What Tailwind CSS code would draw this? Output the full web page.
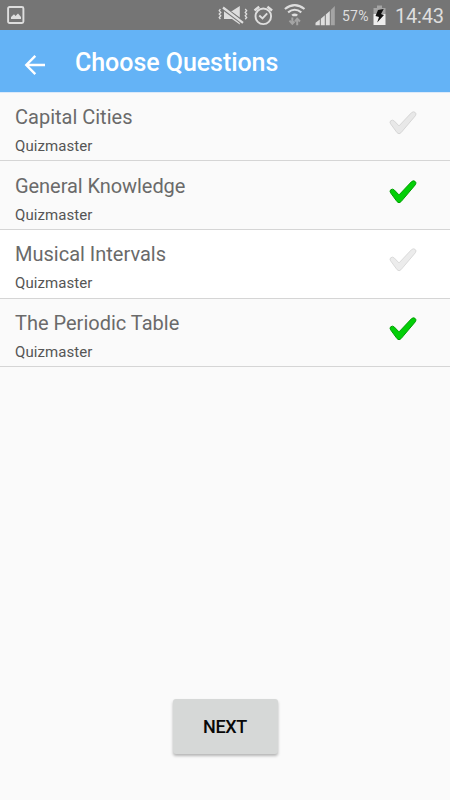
<!DOCTYPE html>
<html lang="en">
<head>
<meta charset="utf-8">
<title>Choose Questions</title>
<script src="https://cdn.jsdelivr.net/npm/@tailwindcss/browser@4"></script>
</head>
<body class="bg-[#fafafa] font-['Roboto',sans-serif]">
<svg class="absolute h-0 w-0">
  <defs>
    <path id="tick" d="M1.6 12.8Q.3 11 1.8 9.7Q3.6 8.4 5.4 10.1L10 14.9L22.6 1.6Q24.3 .2 26 1.3Q27.8 2.7 26.4 4.7L12.1 21.6Q10 24 8 21.6Z"/>
  </defs>
</svg>
<div class="flex h-[800px] w-[450px] flex-col overflow-hidden">
  <div class="flex h-[30px] shrink-0 items-center bg-[#757575] text-[#dedede]">
    <svg class="ml-[7px] h-[18px] w-[18px] shrink-0" viewBox="0 0 18 18"><rect x="1.1" y="1" width="15.3" height="16" rx="1.5" fill="none" stroke="#dedede" stroke-width="1.9"/><path d="M4 13V11L7 8.2L8.5 10L11 7.5L14 11V13Z" fill="#dedede"/></svg>
    <svg class="ml-[193px] h-[30px] w-[30px] shrink-0" viewBox="0 0 30 30" fill="none" stroke="#dedede"><path d="M2.4 9L1.2 10.7L2.8 12.4L1.2 14.1L2.8 15.8L1.2 17.5L2.4 19.2M27.2 9L28.7 10.7L27.2 12.4L28.7 14.1L27.2 15.8L28.7 17.5L27.2 19.2" stroke-width="1.3"/><path d="M6 11H14L21.8 6V24.5L14 19H6Z" fill="#dedede" stroke="none"/><path d="M4.5 7.5L25.5 23" stroke="#757575" stroke-width="4.4"/><path d="M5 7.5L25 22.8" stroke-width="2.3"/></svg>
    <svg class="ml-[5px] h-[30px] w-[20px] shrink-0" viewBox="0 0 20 30" fill="none" stroke="#dedede"><circle cx="10.3" cy="16.3" r="7.8" stroke-width="1.9"/><path d="M6.3 15.5L9.5 18.5L14.2 13.3" stroke-width="1.9"/><path d="M1.5 10.5L6.2 6.8M14.4 6.8L19.1 10.5" stroke-width="2.4"/></svg>
    <svg class="ml-[11px] h-[30px] w-[22px] shrink-0" viewBox="0 0 22 30" fill="none" stroke="#dedede" stroke-width="2.1"><path d="M.9 9Q10.7 1.2 20.5 9M4.1 12.3Q10.7 7.2 17.3 12.3"/><path d="M7.4 14.8Q10.7 12.2 14 14.8L12.6 16.3H8.8Z" fill="#dedede" stroke="none"/><path d="M8.3 17.5V24M5.5 20.7L8.3 23.8L10.5 21.5M13.2 25.3V18.5M11 21.3L13.2 18.8L16 21.5" stroke="#a4a4a4" stroke-width="2"/></svg>
    <svg class="ml-[9px] h-[30px] w-[22px] shrink-0" viewBox="0 0 22 30"><path d="M.5 25.3V22.8L4.8 19.6V25.3ZM5.8 25.3V18.7L9.8 15.3V25.3ZM10.8 25.3V14.5L14.8 11V25.3Z" fill="#dedede"/><path d="M15.8 25.3V10L19.8 6V25.3Z" fill="#a4a4a4"/></svg>
    <span class="ml-[5px] w-[28px] whitespace-nowrap pt-[2px] text-[14px] leading-none tracking-[0.2px]">57%</span>
    <svg class="ml-[3px] h-[30px] w-[14px] shrink-0" viewBox="0 0 14 30"><path d="M4 5.5H9V8H12.5V14H.5V8H4Z" fill="#a4a4a4"/><path d="M.5 14H12.5V25H.5Z" fill="#eee"/><path d="M5 10L10.7 9L8 14L11 15L4.2 22.5L6 17L2.5 16Z" fill="#111"/></svg>
    <span class="ml-[8px] whitespace-nowrap pt-[2px] text-[20px] leading-none tracking-[-0.2px]">14:43</span>
  </div>
  <header class="flex h-[63px] shrink-0 items-start border-b border-[#dceafa] bg-[#64b3f6] text-white">
    <svg class="ml-[24px] mt-[24px] h-[22px] w-[22px] shrink-0" viewBox="0 0 22 22" fill="none" stroke="#fff" stroke-width="2.4"><path d="M21 11H3M11.3 1.8L2.3 11L11.3 20.2"/></svg>
    <h1 class="ml-[29px] mt-[18px] whitespace-nowrap text-[25px] leading-[30px] font-medium tracking-[-0.05px]">Choose Questions</h1>
  </header>
  <ul class="shrink-0 text-[#6a6a6a]">
    <li class="flex h-[68px] justify-between border-b border-[#d5d5d5] pl-[15px] pr-[33px]">
      <div><h2 class="mt-[12px] text-[20px] leading-[24px]">Capital Cities</h2><p class="mt-[7px] text-[15px] leading-[20px] tracking-[0.08px] text-[#555]">Quizmaster</p></div>
      <svg class="mt-[18px] h-[24px] w-[28px]" viewBox="0 0 28 24"><use href="#tick" fill="#e8e8e8" stroke="#d6d6d6"/></svg>
    </li>
    <li class="flex h-[69px] justify-between border-b border-[#d5d5d5] pl-[15px] pr-[33px]">
      <div><h2 class="mt-[13px] text-[20px] leading-[24px] tracking-[-0.06px]">General Knowledge</h2><p class="mt-[7px] text-[15px] leading-[20px] tracking-[0.08px] text-[#555]">Quizmaster</p></div>
      <svg class="mt-[19px] h-[24px] w-[28px]" viewBox="0 0 28 24"><use href="#tick" fill="#03cf08" stroke="#00a000"/></svg>
    </li>
    <li class="flex h-[69px] justify-between border-b border-[#d5d5d5] bg-white pl-[15px] pr-[33px]">
      <div><h2 class="mt-[12px] text-[20px] leading-[24px]">Musical Intervals</h2><p class="mt-[7px] text-[15px] leading-[20px] tracking-[0.08px] text-[#555]">Quizmaster</p></div>
      <svg class="mt-[18px] h-[24px] w-[28px]" viewBox="0 0 28 24"><use href="#tick" fill="#ececec" stroke="#dadada"/></svg>
    </li>
    <li class="flex h-[68px] justify-between border-b border-[#d5d5d5] pl-[15px] pr-[33px]">
      <div><h2 class="mt-[12px] text-[20px] leading-[24px]">The Periodic Table</h2><p class="mt-[7px] text-[15px] leading-[20px] tracking-[0.08px] text-[#555]">Quizmaster</p></div>
      <svg class="mt-[18px] h-[24px] w-[28px]" viewBox="0 0 28 24"><use href="#tick" fill="#03cf08" stroke="#00a000"/></svg>
    </li>
  </ul>
  <div class="mt-auto flex justify-center pb-[46px]">
    <button class="h-[55px] w-[105px] rounded-[3px] bg-[#d6d8d7] text-[18px] font-medium tracking-[-0.3px] text-[#080808] shadow-[0_2px_3px_rgba(0,0,0,0.28)]">NEXT</button>
  </div>
</div>
</body>
</html>
